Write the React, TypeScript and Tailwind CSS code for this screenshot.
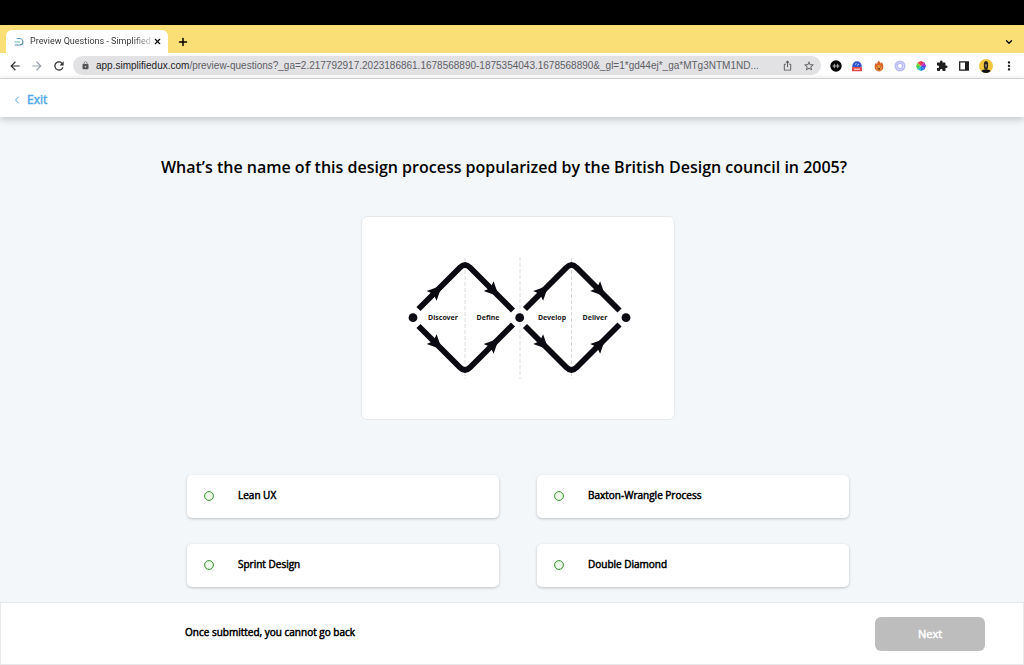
import React, { useState } from "react";
import {
  MdArrowBack,
  MdArrowForward,
  MdRefresh,
  MdLock,
  MdExtension,
  MdMoreVert,
  MdIosShare,
  MdStarBorder,
} from "react-icons/md";
import { ChevronDown, ChevronLeft, Plus, X } from "lucide-react";

const ANSWERS = ["Lean UX", "Baxton-Wrangle Process", "Sprint Design", "Double Diamond"];

const PAGE_HOST = "app.simplifiedux.com";
const PAGE_PATH =
  "/preview-questions?_ga=2.217792917.2023186861.1678568890-1875354043.1678568890&_gl=1*gd44ej*_ga*MTg3NTM1ND...";

const Favicon = () => (
  <svg viewBox="0 0 10 10" className="size-[10px] shrink-0" fill="none" strokeLinecap="round">
    <path d="M3 1.5h3a3.2 3.2 0 0 1 3 3.2" stroke="#5b9bd0" strokeWidth="1" />
    <path d="M.8 5h5" stroke="#69b8b5" strokeWidth="1" />
    <path d="M1.2 8h4.6A3.2 3.2 0 0 0 9 5" stroke="#4b8ba8" strokeWidth="1.1" />
  </svg>
);

const HoneyIcon = () => (
  <svg viewBox="0 0 12 12" className="size-3">
    <circle cx="6" cy="6" r="5.7" fill="#050505" />
    <path d="M4.6 3.8v4.4M7.4 3.8v4.4M4.6 6h2.8M3.3 4.8v2.4M8.7 4.8v2.4" stroke="#ccc" strokeWidth=".8" />
  </svg>
);

const BadgeIcon = () => (
  <svg viewBox="0 0 12 12" className="size-3">
    <path d="M1.3 7V6a4.7 4.7 0 0 1 9.4 0v1z" fill="#3156cf" />
    <path d="M4 4.5l1.5-1M6 5.5l2-1.4" stroke="#b9c8ff" strokeWidth="1" />
    <rect x="1" y="7" width="10" height="4.3" rx="0.6" fill="#e34b4b" />
    <path d="M3 9.2h6" stroke="#ffc6c6" strokeWidth="1.3" />
  </svg>
);

const FlameIcon = () => (
  <svg viewBox="0 0 12 12" className="size-3">
    <path
      d="M6 .3c.2 1.4 1.3 2.2 1.9 3.3.4-.4.6-1 .7-1.7 1 1.2 1.7 2.9 1.7 4.6A4.3 4.5 0 0 1 6 11.500a4.3 4.5 0 0 1-4.300-5c0-1.500.5-2.700 1.300-3.900.2.7.5 1.200 1 1.400C4.300 2.700 5 1.500 6 .3z"
      fill="#d9622b"
    />
    <ellipse cx="6" cy="7.8" rx="2.7" ry="2.6" fill="#f4a13f" />
    <path d="M4.1 6.8l1.1.5M7.9 6.8l-1.1.5M4.7 8.8q1.3 1.1 2.6 0z" stroke="#54230e" strokeWidth=".6" fill="#54230e" />
  </svg>
);

const RingIcon = () => (
  <svg viewBox="0 0 12 12" className="size-3">
    <circle cx="6" cy="6" r="5.5" fill="#b9bcf4" />
    <circle cx="6" cy="6" r="3.7" fill="none" stroke="#e9eafe" strokeWidth="1" strokeDasharray="2 1.3" />
    <circle cx="6" cy="6" r="1.9" fill="#fff" />
  </svg>
);

const ColorWheelIcon = () => (
  <svg viewBox="0 0 12 12" className="size-3">
    <path d="M6 6V1l3.5 1.5z" fill="#e6336e" />
    <path d="M6 6l3.5-3.5L11 6z" fill="#b32bd0" />
    <path d="M6 6h5L9.5 9.5z" fill="#4b50e8" />
    <path d="M6 6l3.5 3.5L6 11z" fill="#2a7de0" />
    <path d="M6 6v5L2.5 9.5z" fill="#29b8d8" />
    <path d="M6 6L2.5 9.5 1 6z" fill="#36cf62" />
    <path d="M6 6H1l1.5-3.5z" fill="#7ed63a" />
    <path d="M6 6L2.5 2.5 6 1z" fill="#ef4040" />
  </svg>
);

const SidePanelIcon = () => (
  <svg viewBox="0 0 12 12" className="size-3">
    <rect x="1.7" y="1.9" width="8.6" height="8.2" fill="none" stroke="#1f1f1f" strokeWidth="1.3" />
    <path d="M7 2h3.5v8H7z" fill="#1f1f1f" />
  </svg>
);

const Avatar = () => (
  <svg viewBox="0 0 14 14" className="size-[14px]">
    <circle cx="7" cy="7" r="7" fill="#f2c63f" />
    <path d="M2.2 12Q3.5 10.2 7 10.2t4.8 1.8A7 7 0 0 1 7 14a7 7 0 0 1-4.8-2z" fill="#0c0c0c" />
    <path d="M4.9 4.6Q4.9 2 7 2t2.1 2.6v2.6Q8.9 10.4 7 10.4T4.9 7.2z" fill="#25201c" />
    <path d="M5.9 5.3h2.2v1.4Q7.9 8.2 7 8.2t-1.1-1.5z" fill="#8d7560" />
  </svg>
);

const EXTENSIONS = [
  { name: "Honey", icon: <HoneyIcon /> },
  { name: "Badge", icon: <BadgeIcon /> },
  { name: "Flame", icon: <FlameIcon /> },
  { name: "Ring", icon: <RingIcon /> },
  { name: "Colors", icon: <ColorWheelIcon /> },
  { name: "Extensions", icon: <MdExtension className="size-3" /> },
  { name: "Side panel", icon: <SidePanelIcon /> },
  { name: "Profile", icon: <Avatar /> },
  { name: "Menu", icon: <MdMoreVert className="size-[14px]" /> },
];

const Arrow = ({ x, y, angle }: { x: number; y: number; angle: number }) => (
  <path d="M2 0L-12.5 -7L-10 0L-12.5 7Z" fill="#0b0911" transform={`translate(${x} ${y}) rotate(${angle})`} />
);

const Diamond = ({ x }: { x: number }) => (
  <g transform={`translate(${x} 0)`}>
    <g fill="none" stroke="#0b0911" strokeWidth="5.8">
      <path d="M56.5 93L98 51.5Q103 46.5 108 51.5L151 94.5" />
      <path d="M56.5 110L98 151.5Q103 156.5 108 151.5L151 108.5" />
    </g>
    <Arrow x={78.5} y={71} angle={-45} />
    <Arrow x={135.5} y={79} angle={45} />
    <Arrow x={78.5} y={132} angle={45} />
    <Arrow x={135.5} y={124} angle={-45} />
  </g>
);

const ProcessDiagram = () => (
  <svg viewBox="0 1 312 202" className="w-full" role="img" aria-label="Design process">
    <g stroke="#dcdce0" strokeWidth="1" strokeDasharray="4 2">
      <path d="M103 42v121M158 41v122M209.5 42v121" />
    </g>
    <Diamond x={0} />
    <Diamond x={106.5} />
    <g fill="#0b0911">
      <circle cx="51" cy="101.7" r="4.4" />
      <circle cx="157.7" cy="101.7" r="4.4" />
      <circle cx="264" cy="101.7" r="4.4" />
    </g>
    <g
      fill="#1c1a22"
      fontSize="7"
      fontWeight="700"
      textAnchor="middle"
      className="font-['Noto_Sans',sans-serif] [-webkit-text-stroke:0]"
    >
      <text x="81" y="104">Discover</text>
      <text x="126" y="104">Define</text>
      <text x="190" y="104">Develop</text>
      <text x="233" y="104">Deliver</text>
    </g>
  </svg>
);

const BrowserBar = () => (
  <div className="font-[Roboto,sans-serif]">
    <div className="h-[25px] bg-black" />
    <div className="flex h-7 items-end justify-between bg-[#fadf76] pr-2 pl-[6px]">
      <div className="flex items-center">
        <div className="flex h-[23px] w-[162px] items-center rounded-t-md bg-white px-2">
          <Favicon />
          <span className="ml-[6px] flex-1 bg-linear-to-r from-[#333] from-85% to-[#ccc] bg-clip-text text-[9px] whitespace-nowrap text-transparent">
            Preview Questions - Simplified
          </span>
          <button aria-label="Close tab" className="ml-[2px]">
            <X className="size-[9px]" strokeWidth={3} />
          </button>
        </div>
        <button aria-label="New tab" className="ml-[9px]">
          <Plus className="size-3" strokeWidth={3} />
        </button>
      </div>
      <button aria-label="Search tabs" className="mb-[6px] px-[2px]">
        <ChevronDown className="size-[10px]" strokeWidth={3} />
      </button>
    </div>
    <div className="flex h-[26px] items-center border-b border-[#dcdcde] bg-white px-2 text-[#333]">
      <button aria-label="Back">
        <MdArrowBack className="size-[14px]" />
      </button>
      <button aria-label="Forward" className="ml-2 text-gray-400">
        <MdArrowForward className="size-[14px]" />
      </button>
      <button aria-label="Reload" className="ml-2">
        <MdRefresh className="size-[14px]" />
      </button>
      <div className="ml-[7px] flex h-[19px] min-w-0 flex-1 items-center rounded-full bg-[#e2e2e5] pr-[6px] pl-2 text-[#555]">
        <MdLock className="size-[9px] shrink-0" />
        <span className="ml-[6px] flex-1 font-['Liberation_Sans',sans-serif] text-[10px] whitespace-nowrap text-[#606064]">
          <span className="text-[#222]">{PAGE_HOST}</span>
          {PAGE_PATH}
        </span>
        <button aria-label="Share">
          <MdIosShare className="size-[11px]" />
        </button>
        <button aria-label="Bookmark" className="ml-[10px]">
          <MdStarBorder className="size-3" />
        </button>
      </div>
      <div className="ml-[9px] flex w-[186px] items-center justify-between text-[#1f1f1f]">
        {EXTENSIONS.map((item) => (
          <button key={item.name} aria-label={item.name}>
            {item.icon}
          </button>
        ))}
      </div>
    </div>
  </div>
);

const App = () => {
  const [answer, setAnswer] = useState("");

  return (
    <div className="flex min-h-screen flex-col bg-[#f3f7fa] font-['Open_Sans',sans-serif] text-black [-webkit-text-stroke:0.03em]">
      <div className="[-webkit-text-stroke:0]">
        <BrowserBar />
      </div>
      <header className="flex h-[38px] items-center bg-white px-[11px] pt-1 shadow-[0_2px_8px_rgba(0,0,0,0.22)]">
        <a href="#exit" className="flex items-center gap-1 text-xs text-[#4fa9ea]">
          <ChevronLeft className="size-3" strokeWidth={2} />
          Exit
        </a>
      </header>

      <main className="flex flex-1 flex-col items-center px-4 pt-9 pb-[14px]">
        <h1 className="-ml-4 text-center text-base leading-7 font-semibold [-webkit-text-stroke:0]">
          What’s the name of this design process popularized by the British Design council in 2005?
        </h1>
        <div className="ml-3 w-full max-w-[662px]">
          <div className="mx-auto mt-[35px] w-[314px] overflow-hidden rounded-md border border-[#e6eaed] bg-white">
            <ProcessDiagram />
          </div>
          <div className="mt-[55px] grid grid-cols-2 gap-x-[38px] gap-y-[26px]">
            {ANSWERS.map((item) => (
              <label
                key={item}
                className="flex h-[43px] items-center rounded-[5px] bg-white px-[17px] pb-[2px] text-[10px] shadow-[0_1px_3px_rgba(0,0,0,0.22)]"
              >
                <input
                  type="radio"
                  name="answer"
                  value={item}
                  checked={answer === item}
                  onChange={() => setAnswer(item)}
                  className="mr-6 size-[10px] appearance-none rounded-full border border-[#4b9b42] bg-[#f0faec] inset-shadow-[0_0_1px_#4b9b42] checked:bg-[#4b9b42]"
                />
                {item}
              </label>
            ))}
          </div>
        </div>
      </main>

      <footer className="flex h-[63px] items-center justify-between border border-[#e6e8ea] bg-white pr-[38px] pl-[184px]">
        <p className="pb-[2px] text-[10px]">Once submitted, you cannot go back</p>
        <button className="h-[34px] w-[110px] rounded-md bg-[#bdbdbd] pt-[2px] text-[11px] text-white">Next</button>
      </footer>
    </div>
  );
};

export default App;
